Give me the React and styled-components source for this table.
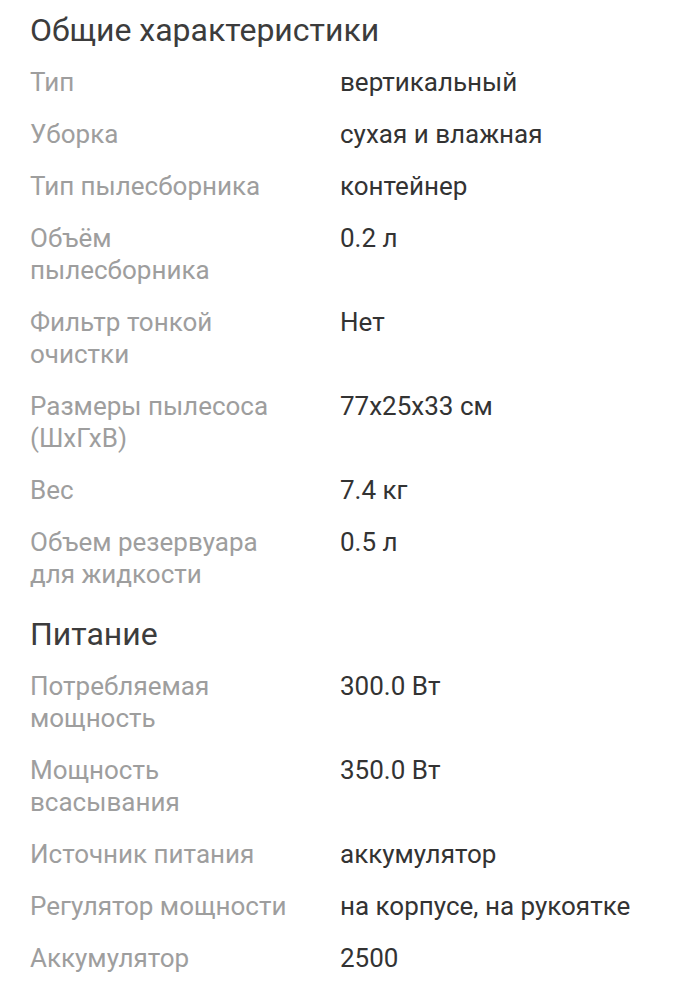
import React from 'react';
import styled, { createGlobalStyle } from 'styled-components';

const GlobalStyle = createGlobalStyle`
  body {
    margin: 0;
    background: #ffffff;
    font-family: Roboto, 'Noto Sans', sans-serif;
  }
`;

const Page = styled.div`
  padding: 14px 30px 0 30px;
  display: flex;
  flex-direction: column;
`;

const Section = styled.section`
  display: flex;
  flex-direction: column;
  gap: 20px;
  margin-bottom: 28px;
`;

const Title = styled.h2`
  margin: 0;
  font-size: 32px;
  line-height: 32px;
  font-weight: 400;
  color: #3c3c3c;
`;

const Row = styled.div`
  display: grid;
  grid-template-columns: 310px 1fr;
  font-size: 26px;
  line-height: 32px;
`;

const Label = styled.div`
  color: #9e9e9e;
  max-width: 262px;
`;

const Value = styled.div`
  color: #333333;
`;

const sections = [
  {
    title: 'Общие характеристики',
    rows: [
      ['Тип', 'вертикальный'],
      ['Уборка', 'сухая и влажная'],
      ['Тип пылесборника', 'контейнер'],
      ['Объём пылесборника', '0.2 л'],
      ['Фильтр тонкой очистки', 'Нет'],
      ['Размеры пылесоса (ШхГхВ)', '77x25x33 см'],
      ['Вес', '7.4 кг'],
      ['Объем резервуара для жидкости', '0.5 л'],
    ],
  },
  {
    title: 'Питание',
    rows: [
      ['Потребляемая мощность', '300.0 Вт'],
      ['Мощность всасывания', '350.0 Вт'],
      ['Источник питания', 'аккумулятор'],
      ['Регулятор мощности', 'на корпусе, на рукоятке'],
      ['Аккумулятор', '2500'],
    ],
  },
];

function App() {
  return (
    <>
      <GlobalStyle />
      <Page>
        {sections.map((section) => (
          <Section key={section.title}>
            <Title>{section.title}</Title>
            {section.rows.map(([label, value]) => (
              <Row key={label}>
                <Label>{label}</Label>
                <Value>{value}</Value>
              </Row>
            ))}
          </Section>
        ))}
      </Page>
    </>
  );
}

export default App;
